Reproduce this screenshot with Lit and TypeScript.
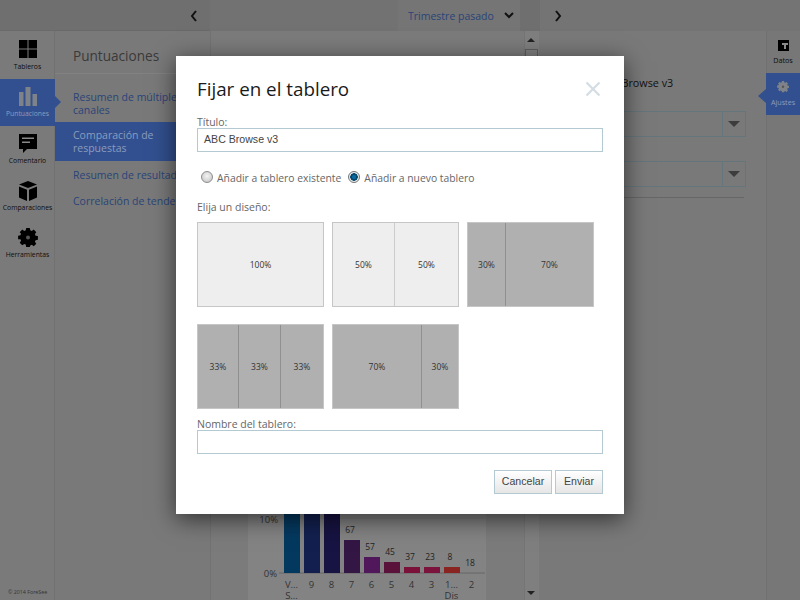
import { LitElement, html, css, svg } from 'lit';
import { customElement } from 'lit/decorators.js';

const gear = svg`<path d="M8 0h4l.500 2.600 1.700.700 2.200-1.500 2.800 2.800-1.500 2.200.700 1.700 2.600.500v4l-2.600.500-.700 1.700 1.500 2.200-2.800 2.800-2.200-1.500-1.700.700L12 21H8l-.500-2.600-1.700-.700-2.200 1.500L.800 16.400l1.500-2.200-.700-1.700L-1 12.500v-4l2.600-.500.700-1.700L.800 4.600l2.800-2.800 2.200 1.500 1.700-.700z" transform="translate(1 0) scale(.9)"/><circle cx="10" cy="9.500" r="2" fill="#555"/>`;

const navItems = [
  { label: 'Tableros', icon: svg`<rect x="1" y="0" width="8.500" height="8.500"/><rect x="10.500" y="0" width="8.500" height="8.500"/><rect x="1" y="9.500" width="8.500" height="8.500"/><rect x="10.500" y="9.500" width="8.500" height="8.500"/>` },
  { label: 'Puntuaciones', active: true, icon: svg`<rect x="1" y="5" width="4.500" height="14"/><rect x="7.500" y="0" width="5" height="19"/><rect x="14.500" y="7" width="4.500" height="12"/>` },
  { label: 'Comentario', icon: svg`<path d="M1 0h18v15H9l-4 4v-4H1z"/><rect x="4" y="3.500" width="12" height="1.500" fill="#888"/><rect x="4" y="7.500" width="8" height="1.500" fill="#888"/>` },
  { label: 'Comparaciones', icon: svg`<path d="M10 0l9 3.500L10 7 1 3.500z"/><path d="M1 5.500l8 3.200V20l-8-3.500zM19 5.500l-8 3.200V20l8-3.500z"/>` },
  { label: 'Herramientas', icon: gear },
];

const listItems = [
  { text: 'Resumen de múltiples canales' },
  { text: 'Comparación de respuestas', active: true },
  { text: 'Resumen de resultados', single: true },
  { text: 'Correlación de tendencias', single: true },
];

const layouts = [
  { parts: [100], widths: ['1fr'], on: true },
  { parts: [50, 50], widths: ['61px', '1fr'], on: true },
  { parts: [30, 70], widths: ['37px', '1fr'] },
  { parts: [33, 33, 33], widths: ['40px', '42px', '1fr'] },
  { parts: [70, 30], widths: ['88px', '1fr'] },
];

const bars = [
  { label: 'V...', label2: 'S...', top: 0, color: '#04395f' },
  { label: '9', top: 0, color: '#13204f' },
  { label: '8', top: 0, color: '#171342' },
  { label: '7', value: '67', top: 26, color: '#341645' },
  { label: '6', value: '57', top: 43, color: '#50175a' },
  { label: '5', value: '45', top: 48, color: '#5a123a' },
  { label: '4', value: '37', top: 53, color: '#7b1138' },
  { label: '3', value: '23', top: 53, color: '#7c133d' },
  { label: '1...', label2: 'Dis', value: '8', top: 53, color: '#8a2420' },
  { label: '2', value: '18', top: 59, color: 'none' },
];

@customElement('app-root')
export class AppRoot extends LitElement {
  static styles = css`
    :host {
      display: block;
      width: 800px;
      height: 600px;
      position: relative;
      overflow: hidden;
      font-family: "Open Sans", sans-serif;
      background: #7a7a7a;
      color: #222;
    }

    .top {
      display: flex;
      height: 31px;
      background: #6f6f6f;
      box-shadow: inset 0 -1px 0 #6a6a6a;
    }
    .top .side { width: 210px; display: flex; justify-content: flex-end; align-items: center; padding-right: 12px; box-sizing: border-box; }
    .top .mid { width: 188px; background: #727272; }
    .top .period {
      width: 122px;
      display: flex;
      align-items: center;
      gap: 10px;
      padding-left: 10px;
      box-sizing: border-box;
      background: #757575;
      color: #2a4478;
      font-size: 10.500px;
      white-space: nowrap;
    }
    .top .gap { width: 20px; background: #6f6f6f; }
    .top .next { flex: 1; background: #747474; padding-left: 14px; display: flex; align-items: center; }

    .body { display: flex; height: 569px; }

    .nav { width: 55px; flex: none; padding-top: 1px; background: #7a7a7a; box-shadow: inset -1px 0 0 #717171; }
    .nav-item {
      height: 47px;
      box-sizing: border-box;
      display: flex;
      flex-direction: column;
      align-items: center;
      padding-top: 8px;
      position: relative;
      font-size: 6.800px;
      color: #0d0d0d;
      white-space: nowrap;
    }
    .nav-item svg { display: block; margin-bottom: 2px; }
    .nav-item.active { background: #32508f; color: #8c9cbe; fill: #7f8389; }
    .nav-item.active::after {
      content: "";
      position: absolute;
      left: 100%;
      top: 17px;
      border: 6px solid transparent;
      border-left-color: #32508f;
      border-right-width: 0;
    }
    .copy { position: absolute; left: 8px; top: 588px; font-size: 5.300px; color: #333; }

    .list { width: 156px; flex: none; background: #797979; box-shadow: inset -1px 0 0 #727272; }
    .list h2 {
      margin: 0;
      height: 43px;
      padding: 15px 0 0 18px;
      box-sizing: border-box;
      font-size: 13.600px;
      font-weight: 400;
      line-height: 20px;
      color: #3a3a3a;
      border-bottom: 1px solid #828282;
    }
    .list ul { list-style: none; margin: 17px 0 0; padding: 0; }
    .list li {
      padding: 0 8px 0 18px;
      font-size: 10.500px;
      line-height: 13px;
      color: #2a4478;
      margin-bottom: 13px;
    }
    .list li.single { white-space: nowrap; }
    .list li.active {
      background: #32508f;
      color: #8a9cbf;
      padding-top: 7px;
      padding-bottom: 6px;
      padding-right: 40px;
      margin: -8px 0 8px;
    }
    .list li:first-child { padding-right: 26px; }

    .main { width: 313px; flex: none; display: flex; flex-direction: column; justify-content: flex-end; background: #7b7b7b; }
    .chart { margin-left: 37px; width: 238px; height: 86px; background: #838383; }
    .chart svg { display: block; font-family: "Open Sans", sans-serif; font-size: 9.500px; }
    .chart .val { font-size: 8.500px; }

    .scroll {
      width: 15px;
      flex: none;
      position: relative;
      background: #7f7f7f;
      box-shadow: inset 1px 0 0 #757575;
    }
    .scroll .up, .scroll .down {
      position: absolute;
      left: 3px;
      width: 0;
      border: 4px solid transparent;
      border-top-width: 0;
      border-bottom-color: #222;
    }
    .scroll .up { top: 7px; }
    .scroll .down { bottom: 5px; transform: rotate(180deg); }
    .scroll .thumb { position: absolute; left: 1px; top: 18px; width: 13px; height: 30px; border: 1px solid #5e5e5e; box-sizing: border-box; }

    .right { width: 227px; flex: none; background: #797979; padding: 44px 0 0 16px; box-sizing: border-box; font-size: 11px; color: #111; }
    .right .name { line-height: 16px; margin: 0 0 20px 43px; font-size: 10.800px; white-space: nowrap; }
    .select {
      display: flex;
      justify-content: flex-end;
      width: 191px;
      height: 26px;
      box-sizing: border-box;
      border: 1px solid #65757c;
      margin-bottom: 24px;
    }
    .select span { width: 22px; border-left: 1px solid #65757c; display: flex; align-items: center; justify-content: center; }
    .select i { border: 6px solid transparent; border-top-color: #3d3d3d; border-bottom-width: 0; }
    .right hr { width: 189px; margin: -14px 0 0; border: 0; border-top: 1px solid #666; }

    .rail { flex: 1; background: #777; box-shadow: inset 1px 0 0 #717171; padding-top: 9px; }
    .rail-item {
      height: 33px;
      display: flex;
      flex-direction: column;
      align-items: center;
      font-size: 7.200px;
      color: #0d0d0d;
    }
    .rail-item svg { display: block; margin-bottom: 4px; }
    .rail-item.active {
      position: relative;
      height: 42px;
      background: #32508f;
      color: #8c9cbe;
      padding-top: 8px;
      box-sizing: border-box;
      fill: #7f8389;
    }
    .rail-item.active::before {
      content: "";
      position: absolute;
      right: 100%;
      top: 16px;
      border: 7px solid transparent;
      border-right: 8px solid #32508f;
      border-left-width: 0;
    }

    .modal {
      position: absolute;
      left: 176px;
      top: 56px;
      width: 448px;
      height: 458px;
      box-sizing: border-box;
      padding: 0 21px;
      background: #fff;
      box-shadow: 0 5px 22px rgba(0, 0, 0, .6);
      color: #666;
      font-size: 10.500px;
    }
    .head { display: flex; justify-content: space-between; align-items: flex-start; height: 60px; padding-top: 20px; box-sizing: border-box; }
    .head h1 { margin: 0; font-size: 18.800px; font-weight: 400; color: #1a1a1a; line-height: 26px; }
    .head svg { margin: 5px 2px 0 0; }
    .field-label { display: block; line-height: 12px; color: #666; }
    .input {
      height: 24px;
      box-sizing: border-box;
      border: 1px solid #b4cad3;
      padding-left: 6px;
      line-height: 21px;
      color: #444;
      font-family: "Liberation Sans", sans-serif;
      font-size: 10.600px;
    }
    .radios { display: flex; align-items: center; height: 16px; margin: 18px 0 0 4px; font-size: 10.350px; white-space: nowrap; }
    .radio {
      width: 12px;
      height: 12px;
      box-sizing: border-box;
      border-radius: 50%;
      border: 1px solid #8d8d8d;
      background: radial-gradient(circle at 50% 40%, #f4f4f4, #c0c0c0);
      margin: -2px 4px 0 0;
    }
    .radio.checked {
      margin-left: 7px;
      background: radial-gradient(circle, #0a6a9f 0 1.500px, #03466f 2.500px 3.500px, #e8e8e8 4px);
      border-color: #777;
    }
    .pick { line-height: 14px; margin: 14px 0 8px; }
    .layouts { display: grid; grid-template-columns: repeat(3, 127px); gap: 17px 8px; }
    .layout {
      height: 85px;
      display: grid;
      box-sizing: border-box;
      border: 1px solid #c6c6c6;
      background: #b0b0b0;
      font-size: 8.500px;
      color: #333;
    }
    .layout.on { background: #eee; }
    .layout div { display: flex; align-items: center; justify-content: center; border-left: 1px solid #909090; }
    .layout.on div { border-left-color: #ccc; }
    .layout div:first-child { border-left: 0; }
    .layout-name { margin-top: 9px; }
    .buttons { display: flex; justify-content: flex-end; gap: 3px; margin-top: 16px; }
    .btn {
      height: 24px;
      box-sizing: border-box;
      border: 1px solid #b4cad3;
      background: linear-gradient(#fff, #e6e6e6);
      line-height: 21px;
      color: #444;
      text-align: center;
      font-family: "Liberation Sans", sans-serif;
      font-size: 10.600px;
    }
    .cancel { width: 58px; }
    .send { width: 48px; }
  `;

  private chevron(d: string) {
    return html`<svg width="8" height="12" viewBox="0 0 8 12" fill="none" stroke="#111" stroke-width="2"><path d=${d}/></svg>`;
  }

  private chart() {
    return svg`
      <line x1="32" x2="238" y1="4" y2="4" stroke="#7b7b7b"/>
      <line x1="31" x2="237" y1="59" y2="59" stroke="#666"/>
      <text x="30" y="9" text-anchor="end" fill="#333">10%</text>
      <text x="29" y="63" text-anchor="end" fill="#333">0%</text>
      ${bars.map((b, i) => {
        const x = 36 + i * 20;
        return svg`
          <rect x=${x} y=${b.top} width="16" height=${59 - b.top} fill=${b.color}/>
          ${b.value ? svg`<text class="val" x=${x + 6} y=${b.top - 7} text-anchor="middle" fill="#222">${b.value}</text>` : ''}
          <text x=${x + 7.5} y="74" text-anchor="middle" fill="#333">${b.label}</text>
          ${b.label2 ? svg`<text x=${x + 7.5} y="84.500" text-anchor="middle" fill="#333">${b.label2}</text>` : ''}
        `;
      })}
    `;
  }

  render() {
    return html`
      <div class="top">
        <div class="side">${this.chevron('M6 1 2 6l4 5')}</div>
        <div class="mid"></div>
        <div class="period">
          Trimestre pasado
          <svg width="10" height="7" viewBox="0 0 10 7" fill="none" stroke="#111" stroke-width="2"><path d="M1 1l4 4 4-4"/></svg>
        </div>
        <div class="gap"></div>
        <div class="next">${this.chevron('M2 1l4 5-4 5')}</div>
      </div>
      <div class="body">
        <div class="nav">
          ${navItems.map(n => html`
            <div class="nav-item ${n.active ? 'active' : ''}">
              <svg width="20" height="20" viewBox="0 0 20 20">${n.icon}</svg>
              ${n.label}
            </div>`)}
        </div>
        <div class="list">
          <h2>Puntuaciones</h2>
          <ul>
            ${listItems.map(l => html`<li class="${l.active ? 'active' : ''} ${l.single ? 'single' : ''}">${l.text}</li>`)}
          </ul>
        </div>
        <div class="main">
          <div class="chart"><svg width="238" height="86">${this.chart()}</svg></div>
        </div>
        <div class="scroll">
          <div class="up"></div>
          <div class="thumb"></div>
          <div class="down"></div>
        </div>
        <div class="right">
          <div class="name">ABC Browse v3</div>
          <div class="select"><span><i></i></span></div>
          <div class="select"><span><i></i></span></div>
          <hr />
        </div>
        <div class="rail">
          <div class="rail-item">
            <svg width="11" height="11" viewBox="0 0 11 11"><path d="M0 0h11v11H0z"/><path d="M4 3h6v2H8v4H6V5H4z" fill="#8a8a8a"/></svg>
            Datos
          </div>
          <div class="rail-item active">
            <svg width="12" height="12" viewBox="0 0 20 20">${gear}</svg>
            Ajustes
          </div>
        </div>
      </div>
      <div class="copy">© 2014 ForeSee</div>

      <div class="modal">
        <div class="head">
          <h1>Fijar en el tablero</h1>
          <svg width="16" height="16" viewBox="0 0 16 16" stroke="#d3dde3" stroke-width="2.200"><path d="M1.500 1.500l13 13M14.500 1.500l-13 13"/></svg>
        </div>
        <span class="field-label">Título:</span>
        <div class="input">ABC Browse v3</div>
        <div class="radios">
          <span class="radio"></span>Añadir a tablero existente
          <span class="radio checked"></span>Añadir a nuevo tablero
        </div>
        <div class="pick">Elija un diseño:</div>
        <div class="layouts">
          ${layouts.map(l => html`
            <div class="layout ${l.on ? 'on' : ''}" style="grid-template-columns:${l.widths.join(' ')}">
              ${l.parts.map(p => html`<div>${p}%</div>`)}
            </div>`)}
        </div>
        <span class="field-label layout-name">Nombre del tablero:</span>
        <div class="input"></div>
        <div class="buttons">
          <div class="btn cancel">Cancelar</div>
          <div class="btn send">Enviar</div>
        </div>
      </div>
    `;
  }
}
